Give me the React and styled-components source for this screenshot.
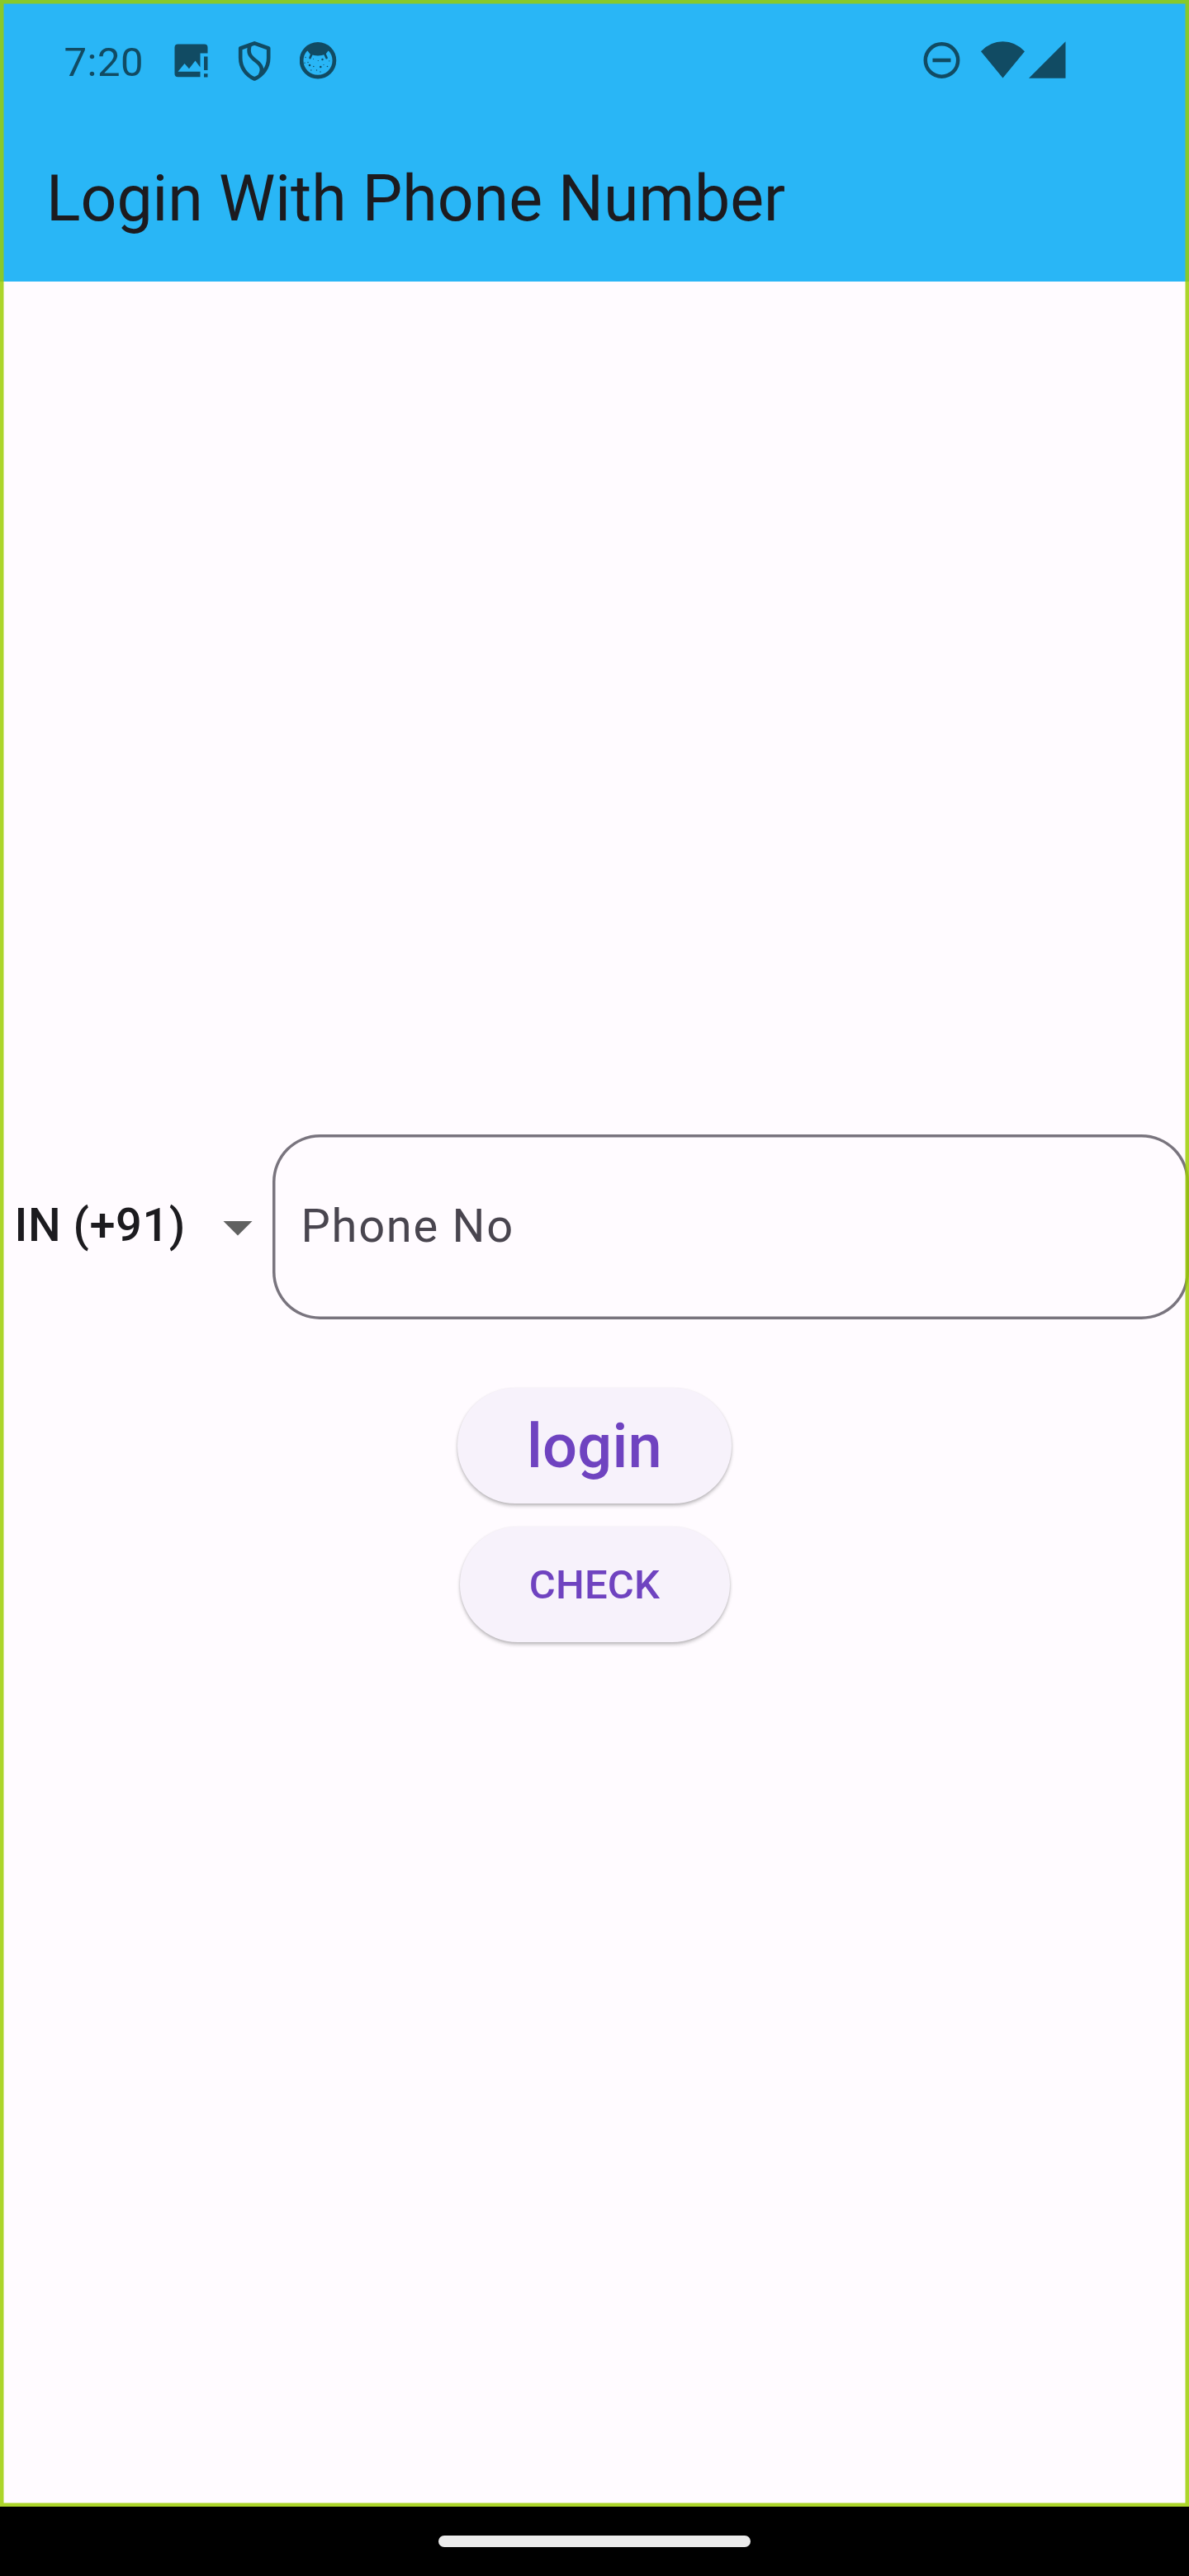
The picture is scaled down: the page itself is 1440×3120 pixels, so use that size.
import React from "react";
import styled, { createGlobalStyle } from "styled-components";

const Global = createGlobalStyle`
  * { box-sizing: border-box; }
  body { margin: 0; background: #000; }
`;

const ink = "#114b63";

const Screen = styled.div`
  width: 1440px;
  height: 3120px;
  display: flex;
  flex-direction: column;
  font-family: Roboto, "Liberation Sans", sans-serif;
  background: #000;
  overflow: hidden;
`;

const AppWindow = styled.div`
  position: relative;
  height: 3036px;
  display: flex;
  flex-direction: column;
  background: #fffbff;
`;

const DebugFrame = styled.div`
  position: absolute;
  inset: 0;
  box-shadow: inset 0 0 0 4.5px rgba(155, 205, 0, 0.83);
  pointer-events: none;
`;

const Header = styled.header`
  height: 341px;
  background: #29b6f6;
`;

const StatusBar = styled.div`
  height: 145px;
  padding: 0 149.5px 0 77px;
  display: flex;
  justify-content: space-between;
  align-items: flex-start;
  color: ${ink};
`;

const StatusGroup = styled.div`
  display: flex;
  align-items: center;
  height: 146px;
`;

const Clock = styled.span`
  width: 128px;
  padding-left: 0.5px;
  font-size: 49px;
  line-height: 58px;
  letter-spacing: 0.5px;
  margin-top: 6px;
`;

const Glyph = styled.svg`
  display: block;
  flex: none;
  margin-left: ${(p) => p.$gap || 0}px;
`;

const Title = styled.h1`
  margin: 0;
  height: 196px;
  padding: 0 56px;
  font-size: 77px;
  font-weight: 400;
  line-height: 193px;
  color: #1c1b1f;
  white-space: nowrap;
`;

const Body = styled.main`
  padding-top: 1032.5px;
  display: flex;
  flex-direction: column;
  align-items: center;
`;

const PhoneRow = styled.div`
  width: 100%;
  height: 224px;
  display: flex;
  align-items: center;
`;

const Country = styled.div`
  width: 329.5px;
  padding-left: 17.5px;
  display: flex;
  align-items: center;
  justify-content: space-between;
  font-size: 56px;
  font-weight: 500;
  line-height: 66px;
  letter-spacing: 0.525px;
  color: #1c1b1f;
  white-space: nowrap;
`;

const CountryCode = styled.span`
  padding-bottom: 3px;
`;

const Field = styled.div`
  flex: 1;
  height: 224px;
  padding-left: 35px;
  border-radius: 57.5px;
  box-shadow: inset 0 0 0 3.5px #79747e;
  font-size: 56px;
  line-height: 223px;
  letter-spacing: 1.75px;
  color: #49454f;
`;

const Actions = styled.div`
  margin-top: 83.5px;
  display: flex;
  flex-direction: column;
  align-items: center;
  gap: 28px;
`;

const Button = styled.button`
  width: ${(p) => p.$width}px;
  height: 140px;
  padding: ${(p) => p.$drop || 0}px 0 0;
  border: 0;
  border-radius: 70px;
  background: #f7f2fb;
  box-shadow: 0 3px 4px rgba(0, 0, 0, 0.22), 0 1px 3px rgba(0, 0, 0, 0.1);
  font-family: inherit;
  font-size: ${(p) => p.$size}px;
  font-weight: 500;
  letter-spacing: 0.2px;
  color: #6f43c0;
`;

const NavBar = styled.footer`
  height: 84px;
  padding-top: 35px;
  display: flex;
  justify-content: center;
`;

const Handle = styled.div`
  width: 378px;
  height: 14px;
  border-radius: 7px;
  background: #ebebeb;
`;

const PictureAlert = () => (
  <Glyph width="41" height="41" viewBox="211 53 41 41" $gap={6}>
    <path fill={ink} fillRule="evenodd" d="M215.500 53.500H247.500Q251.500 53.500 251.500 57.500V64.500H242.500V93.300H215.500Q211.500 93.300 211.500 89.300V57.500Q211.500 53.500 215.500 53.500ZM215.500 86.700H242.500V81.500L236.500 73.500L229 83.300L223.500 77Z" />
    <path fill={ink} d="M247 68.500H251.500V85H247ZM247 89.300H251.500V93.500H247Z" />
  </Glyph>
);

const Shield = () => (
  <Glyph width="42" height="50" viewBox="288.500 48 42 50" $gap={36}>
    <g fill="none" stroke={ink} strokeWidth="4.600" strokeLinejoin="round">
      <path d="M308.700 52.300L291.700 58.500V70C291.700 82 299 91.500 308.700 95.500C318.500 91.500 325.700 82 325.700 70V58.500Z" />
      <path d="M303 55C300.500 64 303 68 309.500 73C317 78.500 319.500 83 315.500 91" />
    </g>
    <path fill={ink} d="M318 81C319.500 85 319 88 316 91L323 82L320.500 84Z" />
  </Glyph>
);

const CatFace = () => (
  <Glyph width="46" height="46" viewBox="363.500 50 46 46" $gap={33}>
    <circle cx="385.500" cy="73.300" r="19.900" fill="none" stroke={ink} strokeWidth="4.700" />
    <path fill={ink} d="M370 62Q376 53 385.500 53T401 62L398 61.500L395 65.500Q385.500 69.500 376 65.500L373 61.500Z" />
    <path d="M378.500 64.500L376 70M393.500 64.500L396 70" fill="none" stroke={ink} strokeWidth="2.700" strokeLinecap="round" />
    <g fill={ink}>
      <circle cx="375.500" cy="79" r="1.300" />
      <circle cx="391" cy="72" r="1.200" />
      <circle cx="388.800" cy="81" r="1.300" />
      <circle cx="380.300" cy="80.500" r=".8" />
      <circle cx="373.500" cy="75.500" r=".7" />
      <circle cx="370.500" cy="69.500" r=".7" />
      <circle cx="380" cy="71.500" r=".5" />
      <circle cx="385.800" cy="73.500" r=".6" />
      <circle cx="399.300" cy="73.800" r=".6" />
      <circle cx="392.500" cy="78.500" r=".6" />
      <circle cx="397" cy="80.500" r=".8" />
      <circle cx="384" cy="85" r=".7" />
      <circle cx="377.300" cy="85" r=".7" />
      <circle cx="388.500" cy="87" r=".7" />
      <circle cx="369.500" cy="76.300" r=".7" />
    </g>
  </Glyph>
);

const DoNotDisturb = () => (
  <Glyph width="46" height="46" viewBox="1118.500 50 46 46">
    <circle cx="1141" cy="73" r="19.700" fill="none" stroke={ink} strokeWidth="4.500" />
    <path d="M1130 73H1152" stroke={ink} strokeWidth="4.600" />
  </Glyph>
);

const Wifi = () => (
  <Glyph width="54" height="46" viewBox="1188 50 54 46" $gap={24}>
    <path fill={ink} d="M1214.500 94.500L1188 62.200Q1199.500 50.300 1214.500 50.300T1241 62.200Z" />
  </Glyph>
);

const Signal = () => (
  <Glyph width="45" height="46" viewBox="1245.500 50 45 46" $gap={3.5}>
    <path fill={ink} d="M1245.500 94.700L1290 50.300V94.700Z" />
  </Glyph>
);

const DropdownArrow = () => (
  <Glyph width="84" height="84" viewBox="0 0 24 24">
    <path fill="#616161" d="M7 10l5 5 5-5z" />
  </Glyph>
);

export default function App() {
  return (
    <Screen>
      <Global />
      <AppWindow>
        <Header>
          <StatusBar>
            <StatusGroup>
              <Clock>7:20</Clock>
              <PictureAlert />
              <Shield />
              <CatFace />
            </StatusGroup>
            <StatusGroup>
              <DoNotDisturb />
              <Wifi />
              <Signal />
            </StatusGroup>
          </StatusBar>
          <Title>Login With Phone Number</Title>
        </Header>
        <Body>
          <PhoneRow>
            <Country>
              <CountryCode>IN (+91)</CountryCode>
              <DropdownArrow />
            </Country>
            <Field>Phone No</Field>
          </PhoneRow>
          <Actions>
            <Button $width={332} $size={74}>login</Button>
            <Button $width={327} $size={49} $drop={1}>CHECK</Button>
          </Actions>
        </Body>
        <DebugFrame />
      </AppWindow>
      <NavBar>
        <Handle />
      </NavBar>
    </Screen>
  );
}
